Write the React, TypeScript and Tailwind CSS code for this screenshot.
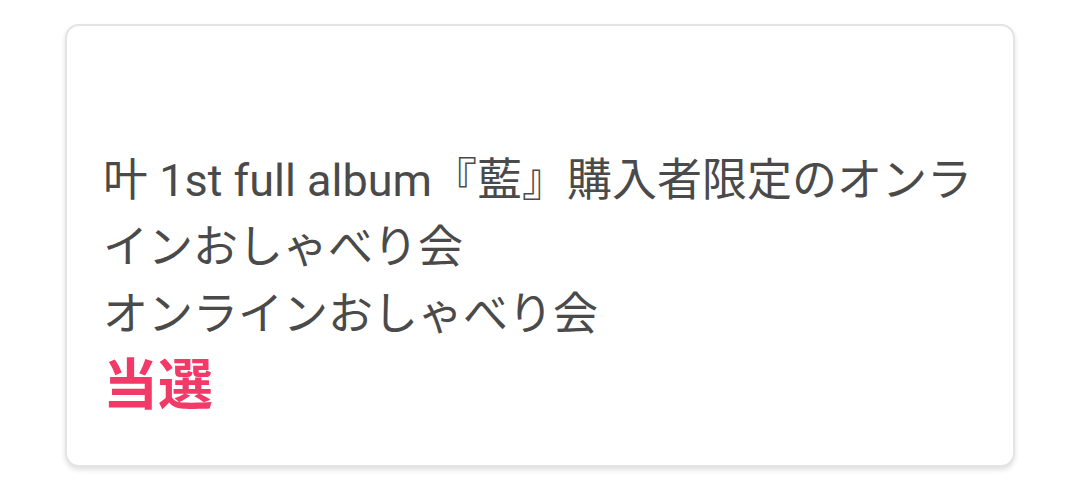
export default function App() {
  return (
    <div className="w-[1080px] h-[487px] bg-white font-['Roboto','Noto_Sans_CJK_JP',sans-serif]">
      <div className="pt-[24px] pl-[65px]">
        <div className="w-[950px] h-[443px] rounded-[14px] border-2 border-[#e4e4e4] bg-white shadow-[0_3px_5px_rgba(0,0,0,0.12)] pl-[36px] pr-[30px] pt-[121px]">
          <p className="text-[45px] leading-[67px] text-[#4a4a4a]">
            叶 1st full album『藍』購入者限定のオンラインおしゃべり会
          </p>
          <p className="text-[45px] leading-[67px] text-[#4a4a4a]">オンラインおしゃべり会</p>
          <p className="mt-[6px] text-[55px] leading-[62px] font-bold text-[#f23a69]">当選</p>
        </div>
      </div>
    </div>
  );
}
